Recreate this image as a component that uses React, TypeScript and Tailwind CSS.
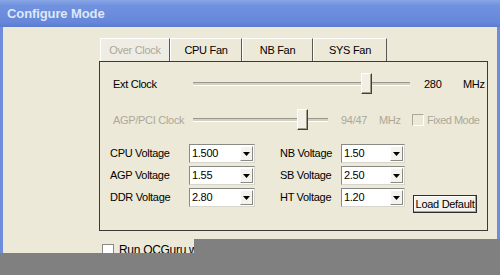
import React from "react";

const font = { fontFamily: '"Liberation Sans", Arial, sans-serif' };

function Slider({ width, thumbAt }: { width: number; thumbAt: number }) {
  return (
    <div className="relative h-[22px] flex items-center" style={{ width }}>
      <div className="w-full h-[4px] border-t border-t-[#9a988c] border-b border-b-white bg-[#d4d0c4]" />
      <div
        className="absolute top-0 w-[11px] h-[21px] bg-[#f2f0e6] border-l border-t border-l-white border-t-white border-r border-b border-r-[#404040] border-b-[#404040] shadow-[inset_-1px_-1px_0_#a09c8c]"
        style={{ left: thumbAt }}
      />
    </div>
  );
}

function Combo({ value, width }: { value: string; width: number }) {
  return (
    <div
      className="h-[19px] flex items-stretch bg-white border border-t-[#8a8a84] border-l-[#8a8a84] border-r-[#d8d6cc] border-b-[#d8d6cc]"
      style={{ width }}
    >
      <div className="flex-1 flex items-center pl-[2px] text-black">{value}</div>
      <div className="w-[13px] m-[1px] bg-[#f4f3ee] border-l border-t border-l-white border-t-white border-r border-b border-r-[#8a8a84] border-b-[#8a8a84] flex items-center justify-center">
        <svg width="7" height="4" viewBox="0 0 7 4">
          <path d="M0 0 H7 L3.5 4 Z" fill="#000" />
        </svg>
      </div>
    </div>
  );
}

function Tab({ label, width, disabled }: { label: string; width: number; disabled?: boolean }) {
  return (
    <div
      className={
        "h-[23px] flex items-center justify-center whitespace-nowrap border-l border-t border-l-white border-t-white border-r border-r-[#5a5a55] " +
        (disabled ? "text-[#aca899] bg-[#efede3]" : "text-black bg-[#ece9d8]")
      }
      style={{ width }}
    >
      {label}
    </div>
  );
}

export default function App() {
  return (
    <div className="relative w-[500px] h-[275px] overflow-hidden bg-[#808080]" style={font}>
      <div className="w-[500px] h-[275px] flex flex-col">
        <div className="h-[27px] shrink-0 flex items-center pl-[7px] bg-[linear-gradient(180deg,#8aa6e6_0%,#7092df_20%,#6788da_80%,#5a7bd0_100%)]">
          <span className="text-[13px] font-bold text-[#dfe7f8] tracking-[-0.1px]">Configure Mode</span>
        </div>
        <div className="flex-1 flex">
          <div className="w-[3px] bg-[#6d8cdc]" />
          <div className="flex-1 bg-[#ece9d8] pl-[96px] pt-[11px] flex flex-col text-[11px] tracking-[-0.3px]">
            <div className="flex ml-[1px]">
              <Tab label="Over Clock" width={70} disabled />
              <Tab label="CPU Fan" width={72} />
              <Tab label="NB Fan" width={71} />
              <Tab label="SYS Fan" width={74} />
            </div>
            <div className="w-[389px] h-[170px] border border-[#3a3a36] flex flex-col">
              <div className="flex items-center mt-[11px] ml-[13px] h-[22px]">
                <div className="w-[80px] text-black">Ext Clock</div>
                <Slider width={217} thumbAt={168} />
                <div className="w-[39px] ml-[14px] text-black">280</div>
                <div className="text-black">MHz</div>
              </div>
              <div className="flex items-center mt-[14px] ml-[13px] h-[22px] text-[#aca899]">
                <div className="w-[80px]">AGP/PCI Clock</div>
                <Slider width={135} thumbAt={104} />
                <div className="w-[38px] ml-[13px]">94/47</div>
                <div className="w-[33px]">MHz</div>
                <div className="w-[12px] h-[12px] border-l border-t border-l-[#aca899] border-t-[#aca899] border-r border-b border-r-white border-b-white" />
                <div className="ml-[3px] whitespace-nowrap tracking-[-0.5px]">Fixed Mode</div>
              </div>
              <div className="mt-[13px] ml-[10px] grid grid-cols-[79px_66px_25px_61px_64px_8px_64px] grid-rows-[19px_19px_19px] gap-y-[3px] items-center text-black">
                <div>CPU Voltage</div>
                <Combo value="1.500" width={66} />
                <div />
                <div>NB Voltage</div>
                <Combo value="1.50" width={64} />
                <div />
                <div />
                <div>AGP Voltage</div>
                <Combo value="1.55" width={66} />
                <div />
                <div>SB Voltage</div>
                <Combo value="2.50" width={64} />
                <div />
                <div />
                <div>DDR Voltage</div>
                <Combo value="2.80" width={66} />
                <div />
                <div>HT Voltage</div>
                <Combo value="1.20" width={64} />
                <div />
                <div className="self-start mt-[7px] h-[18px] flex items-center justify-center whitespace-nowrap bg-[#f3f2ec] border border-[#2e2e2a] shadow-[inset_-1px_-1px_0_#a6a395,inset_1px_1px_0_#fff]">
                  Load Default
                </div>
              </div>
            </div>
            <div className="flex items-center mt-[12px] ml-[3px]">
              <div className="w-[12px] h-[12px] bg-white border border-[#8a8a84]" />
              <div className="ml-[5px] text-[12px] leading-[14px] whitespace-nowrap text-black">Run OCGuru when Windows starts</div>
            </div>
          </div>
          <div className="w-[3px] bg-[#6d8cdc]" />
        </div>
      </div>
      <div className="absolute left-[194px] top-[239px] right-0 bottom-0 bg-[#808080]" />
      <div className="absolute left-0 top-[253px] right-0 bottom-0 bg-[#808080]" />
    </div>
  );
}
